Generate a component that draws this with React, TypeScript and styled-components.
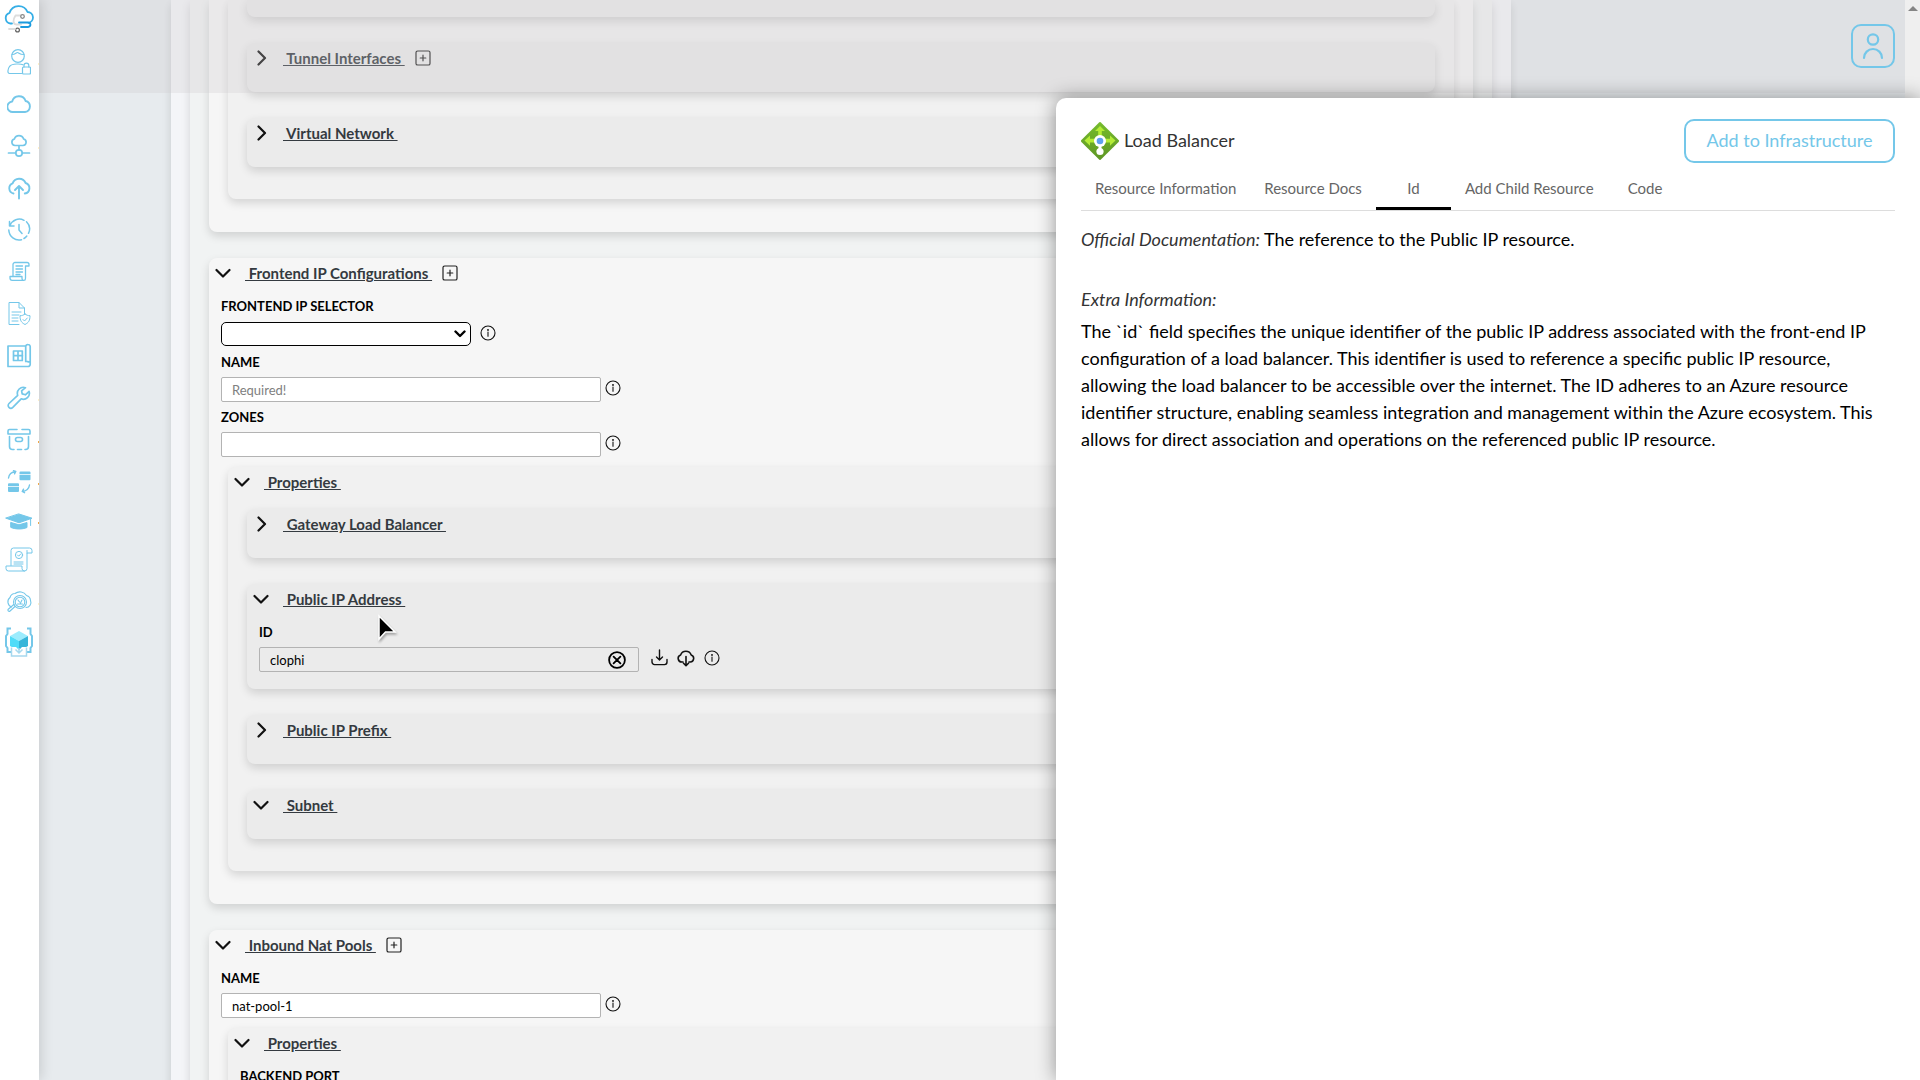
import React, { useState } from "react";
import styled, { createGlobalStyle, css } from "styled-components";

const sky = "#74c7e9";

const GlobalStyle = createGlobalStyle`
  *, *::before, *::after { box-sizing: border-box; }
  body { margin: 0; overflow: hidden; background: #e7ebee; }
  body, button, input, select { font-family: Lato, "Liberation Sans", sans-serif; }
  button { background: none; border: 0; padding: 0; cursor: pointer; color: inherit; }
  svg { display: block; flex: none; }
`;

/* ---------- shell ---------- */

const Shell = styled.div`
  position: relative;
  display: flex;
  height: 100vh;
  overflow: hidden;
`;

const Sidebar = styled.nav`
  flex: none;
  width: 39px;
  background: #fff;
  display: flex;
  flex-direction: column;
  z-index: 3;
  box-shadow: 2px 0 12px rgba(0, 0, 0, 0.14);
`;

const SideLink = styled.a<{ $height?: number; $mark?: string; $gap?: number }>`
  display: flex;
  align-items: center;
  justify-content: center;
  flex: none;
  height: ${(p) => p.$height ?? 42}px;
  margin-bottom: ${(p) => p.$gap ?? 0}px;
  border-right: 1px solid transparent;
  border-image: ${(p) =>
    p.$mark
      ? `linear-gradient(transparent 52%, ${p.$mark} 52%, ${p.$mark} 57%, transparent 57%) 1`
      : "none"};
`;

const Main = styled.main`
  flex: 1;
  min-width: 0;
  overflow: hidden;
  padding-left: 132px;
  padding-right: 394px;
`;

const TopBar = styled.header`
  position: absolute;
  top: 0;
  left: 39px;
  right: 15px;
  height: 93px;
  z-index: 2;
  padding: 24px 10px;
  display: flex;
  justify-content: flex-end;
  align-items: flex-start;
  background: rgba(206, 200, 205, 0.28);
`;

const AvatarButton = styled.button`
  width: 44px;
  height: 44px;
  border: 2px solid ${sky};
  border-radius: 10px;
  display: flex;
  align-items: center;
  justify-content: center;
`;

const ScrollTrack = styled.div`
  flex: none;
  width: 15px;
  padding-top: 6px;
  display: flex;
  justify-content: center;
  background: #efefef;
`;

/* ---------- nested cards ---------- */

const tones = ["#f4f5f8", "#f1f3f3", "#f6f6f6", "#f1f1f1", "#ebebeb"];

const Card = styled.section<{ $level: number; $cut?: boolean; $nested?: boolean }>`
  margin: 9px 0 26px;
  padding: 0 0 16px;
  border-radius: 8px;
  background: ${(p) => tones[p.$level]};
  box-shadow: 0 4px 10px rgba(0, 0, 0, 0.14);
  ${(p) =>
    p.$cut &&
    css`
      margin-top: 0;
      padding-bottom: 17px;
      border-top-left-radius: 0;
      border-top-right-radius: 0;
    `}
  ${(p) =>
    p.$nested &&
    css`
      padding: 0 19px ${p.$level === 2 ? 7 : 6}px;
      display: flow-root;
    `}
`;

const CardHead = styled.div<{ $nested?: boolean }>`
  display: flex;
  align-items: center;
  height: 33px;
  padding: 0 0 4px 7px;
  margin: 0 ${(p) => (p.$nested ? -19 : 0)}px;
`;

const Toggle = styled.button`
  display: flex;
  align-items: center;
  color: #343a40;
`;

const ChevronBox = styled.span`
  width: 13px;
  display: flex;
  justify-content: center;
`;

const CardTitle = styled.span`
  margin-left: 16px;
  white-space: pre;
  font-size: 15px;
  line-height: 20px;
  font-weight: 700;
  text-decoration: underline;
`;

const IconButton = styled.button<{ $left?: number; $raised?: boolean }>`
  display: flex;
  margin-left: ${(p) => p.$left ?? 8}px;
  padding-bottom: ${(p) => (p.$raised ? 3 : 0)}px;
`;

/* ---------- fields ---------- */

const Fields = styled.div<{ $nested?: boolean }>`
  padding: 0 12px 1px;
  margin: 0 ${(p) => (p.$nested ? -19 : 0)}px;
`;

const FieldLabel = styled.label`
  display: block;
  font-size: 13px;
  line-height: 30px;
  font-weight: 700;
  color: #000;
  text-transform: uppercase;
`;

const FieldRow = styled.div<{ $tall?: boolean }>`
  display: flex;
  align-items: center;
  height: ${(p) => (p.$tall ? 26 : 25)}px;
`;

const InputBox = styled.div<{ $filled?: boolean }>`
  display: flex;
  align-items: center;
  width: 380px;
  height: 25px;
  padding-right: 12px;
  border: 1px solid #b3b3b3;
  border-radius: 2px;
  background: ${(p) => (p.$filled ? "#ebebeb" : "#fff")};
`;

const TextInput = styled.input`
  flex: 1;
  min-width: 0;
  border: 0;
  outline: 0;
  padding: 0 10px;
  background: none;
  font-size: 13px;
  color: #000;
  &::placeholder {
    color: #808080;
  }
`;

const SelectWrap = styled.div`
  display: grid;
  align-items: center;
  width: 250px;
  > * {
    grid-area: 1 / 1;
  }
  > svg {
    justify-self: end;
    margin-right: 5px;
    pointer-events: none;
  }
`;

const Select = styled.select`
  appearance: none;
  width: 100%;
  height: 24px;
  border: 1px solid #000;
  border-radius: 5px;
  background: #fff;
`;

/* ---------- detail panel ---------- */

const Panel = styled.aside`
  position: absolute;
  top: 98px;
  right: 0;
  bottom: 0;
  width: 45%;
  z-index: 4;
  padding: 21px 25px;
  background: #fff;
  border-top-left-radius: 10px;
  box-shadow: 0 0 20px rgba(0, 0, 0, 0.4);
`;

const PanelHead = styled.div`
  display: flex;
  align-items: center;
  justify-content: space-between;
`;

const PanelTitle = styled.h1`
  display: flex;
  align-items: center;
  gap: 5px;
  margin: 0;
  font-size: 18px;
  font-weight: 400;
  color: #333;
  span {
    padding-bottom: 2px;
  }
`;

const AddButton = styled.button`
  width: 211px;
  height: 44px;
  padding-bottom: 2px;
  border: 2px solid ${sky};
  border-radius: 10px;
  color: ${sky};
  font-size: 18px;
`;

const Tabs = styled.div`
  display: flex;
  height: 48px;
  border-bottom: 1px solid #ddd;
`;

const Tab = styled.button<{ $active?: boolean }>`
  min-width: 75px;
  padding: 6px 14px 0;
  font-size: 15px;
  color: #666;
  border-bottom: 3px solid ${(p) => (p.$active ? "#000" : "transparent")};
`;

const Copy = styled.p`
  margin: 15px 0 0;
  font-size: 18px;
  line-height: 27px;
  color: #000;
  em {
    color: #333;
  }
`;

const ExtraHeading = styled.h2`
  margin: 33px 0 0;
  font-size: 18px;
  line-height: 27px;
  font-weight: 400;
  font-style: italic;
  color: #333;
  & + ${Copy} {
    margin-top: 5px;
  }
`;

const Pointer = styled.svg`
  position: absolute;
  left: 377px;
  top: 614px;
  z-index: 5;
  filter: drop-shadow(1px 2px 1px rgba(0, 0, 0, 0.3));
`;

/* ---------- icons ---------- */

const Line = ({
  w = 24,
  h = 24,
  sw = 1.6,
  color = sky,
  children,
}: {
  w?: number;
  h?: number;
  sw?: number;
  color?: string;
  children: React.ReactNode;
}) => (
  <svg
    width={w}
    height={h}
    viewBox={`0 0 ${w} ${h}`}
    fill="none"
    stroke={color}
    strokeWidth={sw}
    strokeLinecap="round"
    strokeLinejoin="round"
    aria-hidden="true"
  >
    {children}
  </svg>
);

const Chevron = ({ open }: { open: boolean }) =>
  open ? (
    <Line w={16} h={16} sw={2.2} color="#111">
      <path d="M1.5 5 8 11.5 14.5 5" />
    </Line>
  ) : (
    <Line w={16} h={16} sw={2.2} color="#111">
      <path d="M5.5 1.5 12 8 5.5 14.5" />
    </Line>
  );

const Info = () => (
  <Line w={16} h={16} sw={1.1} color="#111">
    <circle cx="8" cy="8" r="7" />
    <path d="M8 7v4.2" />
    <circle cx="8" cy="4.9" r=".4" fill="#111" />
  </Line>
);

const PlusSquare = () => (
  <Line w={16} h={16} sw={1.2} color="#222">
    <rect x="1" y="1" width="14" height="14" rx="1.6" />
    <path d="M8 5.2v5.6M5.2 8h5.6" />
  </Line>
);

const Download = () => (
  <Line w={17} h={18} sw={1.4} color="#111">
    <path d="M1 10.500v2.600a2.500 2.500 0 0 0 2.500 2.500h10a2.500 2.500 0 0 0 2.500-2.500v-2.600M8.500 1v9.800M5.500 8l3 3 3-3" />
  </Line>
);

const CloudDown = () => (
  <Line w={18} h={18} sw={1.6} color="#111">
    <path d="M6 13H4.800A3.600 3.600 0 0 1 3.600 6 5.600 5.600 0 0 1 14.200 6 3.600 3.600 0 0 1 13.300 13H12" />
    <path d="M9 7.500v9M6.500 14.200 9 16.700l2.500-2.500" />
  </Line>
);

const Clear = () => (
  <Line w={18} h={18} sw={1.8} color="#000">
    <circle cx="9" cy="9" r="7.900" />
    <path d="m5.600 5.600 6.800 6.800M12.400 5.600l-6.800 6.800" />
  </Line>
);

const LoadBalancerIcon = () => (
  <svg width="38" height="38" viewBox="0 0 38 38" aria-hidden="true">
    <defs>
      <linearGradient id="lb" x1="0" y1="0" x2="0" y2="1">
        <stop offset="0" stopColor="#76bc2d" />
        <stop offset="1" stopColor="#5e9624" />
      </linearGradient>
    </defs>
    <path d="M18.100.400a1.300 1.300 0 0 1 1.800 0l17.700 17.700a1.300 1.300 0 0 1 0 1.800L19.900 37.600a1.300 1.300 0 0 1-1.800 0L.400 19.900a1.300 1.300 0 0 1 0-1.800z" fill="url(#lb)" />
    <path d="M19 4l5 5h-3.200v5h-3.600V9H14zM3.500 18.500l5.500-5v3.300h5v3.600H9v3.400zM34.500 18.500l-5.500-5v3.300h-5v3.600h5v3.400z" fill="#b4ec36" />
    <path d="M17.500 22h3v5h-3z" fill="#fff" />
    <circle cx="19" cy="29.500" r="3.600" fill="#fff" />
    <circle cx="19" cy="19" r="6" fill="#fff" />
    <circle cx="19" cy="19" r="3.300" fill="#5ea0ef" />
  </svg>
);

const Logo = () => (
  <Line w={30} h={30} sw={1.8}>
    <path d="M8 20.500H6.500A5.500 5.500 0 0 1 5.600 9.800 9.500 9.500 0 0 1 23.500 9a5.500 5.500 0 0 1 1 10.900" stroke="#35aee6" />
    <path d="M12 12.500h4M11.500 12.500c-2.500 4-3 8 .5 9h5" stroke="#ddd" />
    <path d="M15 19.500h9c3 0 3.500 4 0 4.500h-7" stroke="#1b9ade" />
    <circle cx="18.500" cy="13.500" r="1.800" stroke="#888" strokeWidth="1.300" />
    <circle cx="13.500" cy="27" r="1.900" stroke="#666" strokeWidth="1.300" />
    <path d="M5 26h6" stroke="#ddd" />
  </Line>
);

const UserLock = () => (
  <Line w={24} h={26} sw={1.2}>
    <circle cx="11" cy="7" r="6.300" />
    <path d="M5 5.500c3.500 0 4-2 5.500-2s2 2.200 6.500 2M14.500 24.500H2.500C.200 24.500.600 20 2.500 17.500c2.500-3 6-2.500 8.500-2.500 2 0 3.500 0 5 .700" />
    <rect x="15.500" y="18" width="8" height="7" rx="1" />
    <path d="M17 18v-1.500a2.400 2.400 0 0 1 4.800 0V18" />
  </Line>
);

const CloudIcon = () => (
  <Line sw={1.9}>
    <path d="M6 20A5.200 5.200 0 0 1 5.200 9.500 7 7 0 0 1 18.600 9 5.600 5.600 0 0 1 18 20z" />
  </Line>
);

const CloudNode = () => (
  <Line sw={1.7}>
    <path d="M8 11.500a3.300 3.300 0 0 1-.600-6.500 4.800 4.800 0 0 1 9.200 0A3.300 3.300 0 0 1 16 11.500zM12 12v4M1.500 19h7M15.500 19h7" />
    <circle cx="12" cy="19" r="3.200" />
  </Line>
);

const CloudUp = () => (
  <Line sw={1.9}>
    <path d="M6.500 17.500A5.300 5.300 0 0 1 5.600 7.400 7 7 0 0 1 18.600 7 5.400 5.400 0 0 1 17.800 17.500M12 22.500V10.500M8 14l4-4 4 4" />
  </Line>
);

const History = () => (
  <Line sw={1.5}>
    <path d="M2.500 3.500v4.500H7M3 7.500A10 10 0 0 1 17 2.300M19.500 3.800a10 10 0 0 1 2 11.500M19.800 18A10 10 0 0 1 17 20.500M14.500 21.700A10.300 10.300 0 0 1 1.800 12M12 6.500V12l3 3.500" />
  </Line>
);

const Script = () => (
  <Line w={22} h={22} sw={1.3}>
    <path d="M5 15V3.500a2 2 0 0 1 2-2h12a2 2 0 0 1 2 2V5h-3.500M17.500 5V17M2 15.500h12v2c0 2.500 3.500 2.500 3.500 0M2 15.500v1.500c0 1.500 1 2.300 2.200 2.300H16M8 5h6.500M8 8h6.500M8 11h6.500M8 13.500h4" />
  </Line>
);

const DocShield = () => (
  <Line sw={1}>
    <path d="M12 22.500H2V.500h10l5.500 5.500V12M12 .500V6h5.500M5 10h9M5 13h7M5 16h6M5 19h6" />
    <path d="M18 12c1.500 1.200 3 1.700 5 1.700 0 5-1.500 7-5 8.800-3.500-1.800-5-3.800-5-8.800 2 0 3.500-.500 5-1.700z" />
    <path d="m16 17.500 1.500 1.500 2.800-3" />
  </Line>
);

const Blueprint = () => (
  <Line w={26} h={26} sw={1.7}>
    <path d="M19.500 3H2V23.500h20a2.200 2.200 0 0 0 2.200-2.200V4A2.200 2.200 0 0 0 22 1.500a2.200 2.200 0 0 0-2.300 2.300V18.500H22M22 18.800h2" />
    <path d="M7.500 8h8.800v9.500H7.500zM12 8V17.500M7.500 12.700h9" />
  </Line>
);

const Wrench = () => (
  <Line sw={1.7}>
    <path d="M18.500 1.700a6 6 0 0 0-7.800 7.600L2 17.500a2.700 2.700 0 0 0 3.800 3.900l8.400-8.600a6 6 0 0 0 7.900-7.400l-3.700 3.400-3.200-.900-.600-3z" />
  </Line>
);

const Archive = () => (
  <Line sw={1.6}>
    <path d="M10 1.500H2.500C1.500 1.500 1 2 1 3v3h22V3c0-1-.500-1.500-1.500-1.500H15M2.500 8.500v10a3 3 0 0 0 3 3H7M10.500 21.500h4M18 21.500h.500a3 3 0 0 0 3-3V8.500" />
    <rect x="8.500" y="9.500" width="7" height="4" rx="2" />
  </Line>
);

const Swap = () => (
  <Line sw={1.4}>
    <path d="M1.500 8C2 4.500 4.500 2 8.500 1.500M6.500.700 8.800 1.500 7.500 3.800M22.500 15c-.500 3.500-3 6-7 6.500M17.500 22.700 15.200 21.500l1.300-2.300" />
    <path d="M13.500 1.500h9a1 1 0 0 1 1 1v1.700h-11V2.500a1 1 0 0 1 1-1zM12.500 5h11v4.200a1 1 0 0 1-1 1h-9a1 1 0 0 1-1-1zM2 13.300h9a1 1 0 0 1 1 1V16H1v-1.700a1 1 0 0 1 1-1zM1 16.800h11V21a1 1 0 0 1-1 1H2a1 1 0 0 1-1-1z" fill={sky} stroke="none" />
  </Line>
);

const Cap = () => (
  <Line w={28} h={17} sw={1}>
    <path d="M14 1 27 5.200 14 9.800 1 5.200zM6 9.500l8 2.300 8-2.300v5c-4.500 2-11.500 2-16 0z" fill={sky} />
    <path d="M25.600 6v6.500" />
  </Line>
);

const ScrollShield = () => (
  <Line w={28} h={26} sw={1}>
    <path d="M6 18.500V3.500A2.500 2.500 0 0 1 8.500 1h16A2.500 2.500 0 0 1 27 3.500V6h-5V21.500a2.500 2.500 0 0 1-5 0v-2.500H1v2.500a2.500 2.500 0 0 0 2.500 2.500h16M22 6V3.500M9 15h9M9 17h9" />
    <circle cx="14" cy="8" r="3.600" />
    <path d="m12.500 8 1.200 1.200 2-2.200" />
  </Line>
);

const CloudSearch = () => (
  <Line w={28} h={24} sw={1.1}>
    <path d="M6.500 17A5.500 5.500 0 0 1 5 7.500 5.500 5.500 0 0 1 10 3.500 8 8 0 0 1 21.500 5.500 5.500 5.500 0 0 1 25.500 10.500 5 5 0 0 1 21 17.500" />
    <circle cx="15" cy="12" r="6.500" />
    <circle cx="15" cy="12" r="4.800" />
    <path d="m10 16.500-5.500 5a1.500 1.500 0 0 1-1.500-2L8.800 14.500M13 10l1.500 2M17 10l-1.500 3M12.500 14h5" />
  </Line>
);

const CubeIcon = () => (
  <svg width="28" height="30" viewBox="0 0 28 30" fill="none" aria-hidden="true">
    <path d="M6 1.500H2.500v5.500L1 9v10l1.500 2v4H6M22 1.500h3.500v5.500L27 9v10l-1.500 2v4H22" stroke={sky} strokeWidth="2" />
    <path d="M14 4 23 9 14 14 5 9z" fill="#9cecfd" />
    <path d="M5 9l9 5v10L5 19z" fill="#50dcf8" />
    <path d="M23 9l-9 5v10l9-5z" fill="#36b5d9" />
    <path d="M6 20v9h16v-9h-5l-3 3-3-3z" fill="#fff" />
    <path d="M6.500 20.500V29h15v-8.500M14 21v5M10.500 22.500 14 26l3.500-3.500" stroke="#a6d8ee" strokeWidth="1.500" />
  </svg>
);

const menu: { name: string; icon: React.ReactNode; height?: number; gap?: number; mark?: string }[] = [
  { name: "Home", icon: <Logo />, height: 36, gap: 5 },
  { name: "Access", icon: <UserLock />, mark: "#fff0c8" },
  { name: "Clouds", icon: <CloudIcon /> },
  { name: "Network", icon: <CloudNode />, mark: "#fff0c8" },
  { name: "Deploy", icon: <CloudUp /> },
  { name: "History", icon: <History /> },
  { name: "Scripts", icon: <Script /> },
  { name: "Policies", icon: <DocShield /> },
  { name: "Blueprints", icon: <Blueprint /> },
  { name: "Tools", icon: <Wrench />, mark: "#fff0c8" },
  { name: "Archive", icon: <Archive />, mark: "#f0a848" },
  { name: "Migrate", icon: <Swap />, mark: "#f0a848" },
  { name: "Learn", icon: <Cap />, height: 36, mark: "#f0a848" },
  { name: "Compliance", icon: <ScrollShield /> },
  { name: "Explore", icon: <CloudSearch />, mark: "#fff0c8" },
  { name: "Resources", icon: <CubeIcon />, height: 38 },
];

/* ---------- composed parts ---------- */

const Group = ({
  title,
  level,
  open = false,
  addable,
  nested,
  fields,
  children,
}: {
  title: string;
  level: number;
  open?: boolean;
  addable?: boolean;
  nested?: boolean;
  fields?: React.ReactNode;
  children?: React.ReactNode;
}) => (
  <Card $level={level} $nested={nested}>
    <CardHead $nested={nested}>
      <Toggle type="button" aria-expanded={open}>
        <ChevronBox>
          <Chevron open={open} />
        </ChevronBox>
        <CardTitle>{` ${title} `}</CardTitle>
      </Toggle>
      {addable && (
        <IconButton type="button" aria-label={`Add ${title}`} $left={10}>
          <PlusSquare />
        </IconButton>
      )}
    </CardHead>
    {fields && <Fields $nested={nested}>{fields}</Fields>}
    {children}
  </Card>
);

const InfoButton = ({ about, left }: { about: string; left?: number }) => (
  <IconButton type="button" aria-label={`About ${about}`} $left={left} $raised>
    <Info />
  </IconButton>
);

const TextField = ({
  id,
  label,
  value = "",
  placeholder,
  linked,
}: {
  id: string;
  label: string;
  value?: string;
  placeholder?: string;
  linked?: boolean;
}) => (
  <>
    <FieldLabel htmlFor={id}>{label}</FieldLabel>
    <FieldRow>
      <InputBox $filled={linked}>
        <TextInput id={id} defaultValue={value} placeholder={placeholder} />
        {linked && (
          <IconButton type="button" aria-label="Clear">
            <Clear />
          </IconButton>
        )}
      </InputBox>
      {linked && (
        <>
          <IconButton type="button" aria-label="Import" $left={12} $raised>
            <Download />
          </IconButton>
          <IconButton type="button" aria-label="Fetch from cloud" $left={9} $raised>
            <CloudDown />
          </IconButton>
        </>
      )}
      <InfoButton about={label} left={linked ? 9 : 4} />
    </FieldRow>
  </>
);

const tabNames = ["Resource Information", "Resource Docs", "Id", "Add Child Resource", "Code"];

export default function App() {
  const [tab, setTab] = useState("Id");
  return (
    <Shell>
      <GlobalStyle />
      <Sidebar>
        {menu.map((m) => (
          <SideLink key={m.name} href="#" aria-label={m.name} $height={m.height} $gap={m.gap} $mark={m.mark}>
            {m.icon}
          </SideLink>
        ))}
      </Sidebar>

      <Main>
        <Card $level={0} $nested $cut>
          <Card $level={1} $nested $cut>
            <Card $level={2} $nested $cut>
              <Card $level={3} $nested $cut>
                <Card $level={4} $cut />
                <Group title="Tunnel Interfaces" level={4} addable />
                <Group title="Virtual Network" level={4} />
              </Card>
            </Card>

            <Group
              title="Frontend IP Configurations"
              level={2}
              open
              addable
              nested
              fields={
                <>
                  <FieldLabel htmlFor="selector">Frontend IP Selector</FieldLabel>
                  <FieldRow $tall>
                    <SelectWrap>
                      <Select id="selector" />
                      <Line w={12} h={12} sw={2.4} color="#000">
                        <path d="M1.500 3.500 6 8l4.500-4.500" />
                      </Line>
                    </SelectWrap>
                    <InfoButton about="Frontend IP Selector" left={9} />
                  </FieldRow>
                  <TextField id="fe-name" label="Name" placeholder="Required!" />
                  <TextField id="fe-zones" label="Zones" />
                </>
              }
            >
              <Group title="Properties" level={3} open nested>
                <Group title="Gateway Load Balancer" level={4} />
                <Group
                  title="Public IP Address"
                  level={4}
                  open
                  fields={<TextField id="ip-id" label="Id" value="clophi" linked />}
                />
                <Group title="Public IP Prefix" level={4} />
                <Group title="Subnet" level={4} open />
              </Group>
            </Group>

            <Group
              title="Inbound Nat Pools"
              level={2}
              open
              addable
              nested
              fields={<TextField id="pool-name" label="Name" value="nat-pool-1" />}
            >
              <Group
                title="Properties"
                level={3}
                open
                nested
                fields={<TextField id="pool-port" label="Backend Port" />}
              />
            </Group>
          </Card>
        </Card>
      </Main>

      <ScrollTrack>
        <svg width="10" height="5" viewBox="0 0 10 5" aria-hidden="true">
          <path d="M0 5 5 0l5 5z" fill="#858585" />
        </svg>
      </ScrollTrack>

      <TopBar>
        <AvatarButton type="button" aria-label="Account">
          <Line w={24} h={28} sw={2.2}>
            <circle cx="12" cy="7.500" r="5.200" />
            <path d="M3 26a9 9 0 0 1 18 0" />
          </Line>
        </AvatarButton>
      </TopBar>

      <Panel>
        <PanelHead>
          <PanelTitle>
            <LoadBalancerIcon />
            <span>Load Balancer</span>
          </PanelTitle>
          <AddButton type="button">Add to Infrastructure</AddButton>
        </PanelHead>
        <Tabs role="tablist">
          {tabNames.map((name) => (
            <Tab
              key={name}
              type="button"
              role="tab"
              aria-selected={name === tab}
              $active={name === tab}
              onClick={() => setTab(name)}
            >
              {name}
            </Tab>
          ))}
        </Tabs>
        <Copy>
          <em>Official Documentation:</em> The reference to the Public IP resource.
        </Copy>
        <ExtraHeading>Extra Information:</ExtraHeading>
        <Copy>
          The `id` field specifies the unique identifier of the public IP address associated with the front-end IP
          configuration of a load balancer. This identifier is used to reference a specific public IP resource,
          allowing the load balancer to be accessible over the internet. The ID adheres to an Azure resource
          identifier structure, enabling seamless integration and management within the Azure ecosystem. This
          allows for direct association and operations on the referenced public IP resource.
        </Copy>
      </Panel>

      <Pointer width="22" height="30" viewBox="0 0 22 30" aria-hidden="true">
        <path d="M2 2v23l6.500-7H18z" fill="#000" stroke="#fff" strokeWidth="1.500" />
      </Pointer>
    </Shell>
  );
}
